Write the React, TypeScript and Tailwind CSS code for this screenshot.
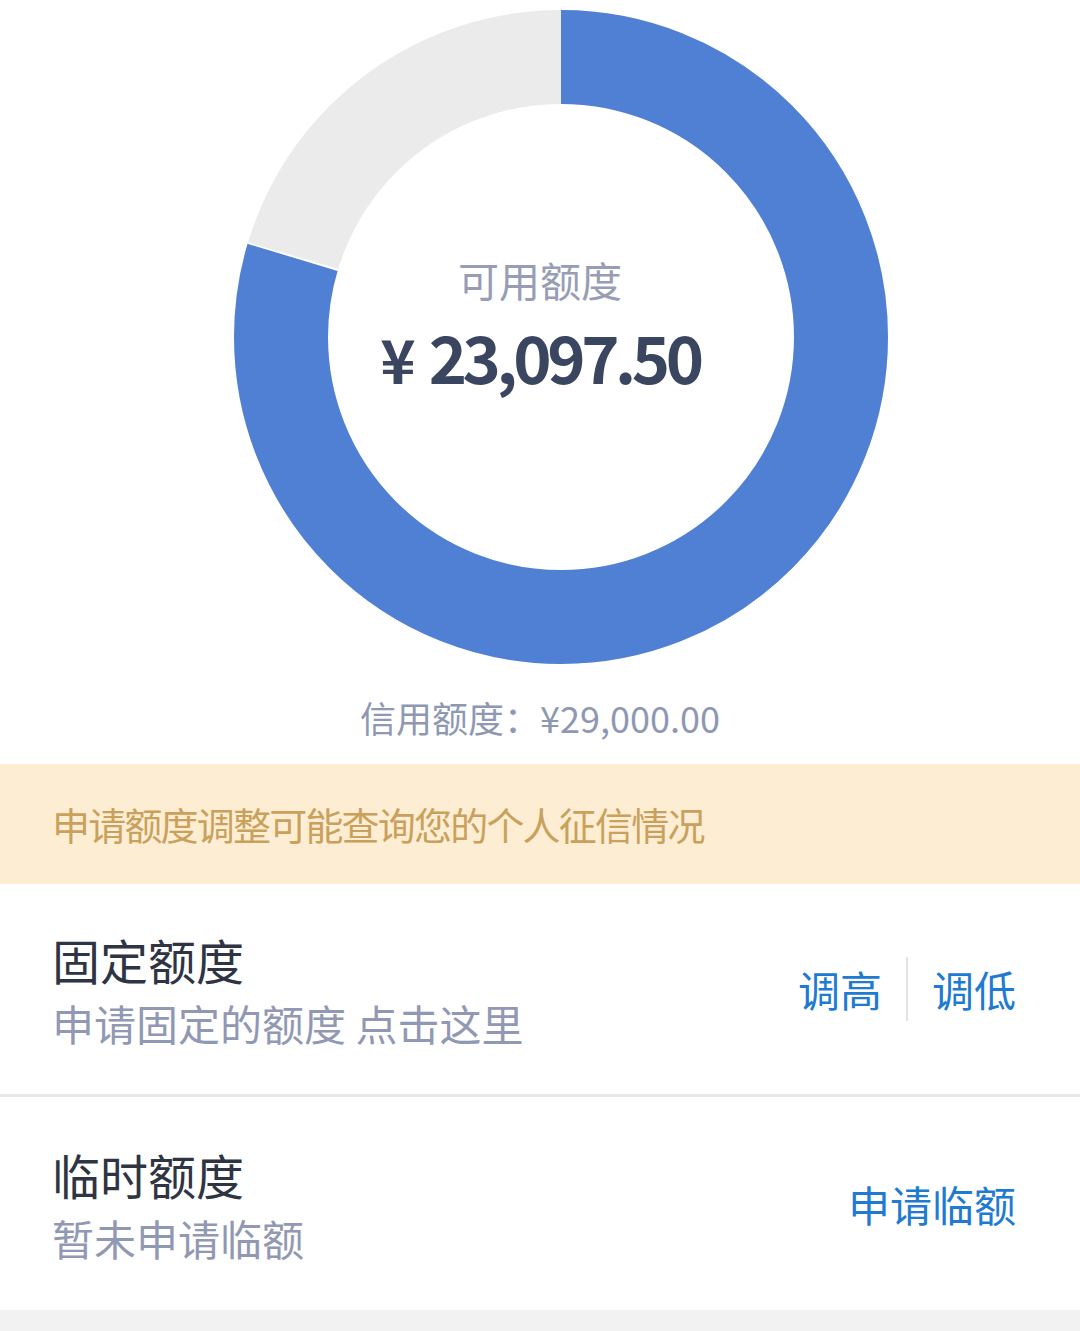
import React from "react";

type LimitRow = {
  title: string;
  desc: string;
  actions: string[];
};

const rows: LimitRow[] = [
  { title: "固定额度", desc: "申请固定的额度 点击这里", actions: ["调高", "调低"] },
  { title: "临时额度", desc: "暂未申请临额", actions: ["申请临额"] },
];

const total = 29000;
const available = 23097.5;

function Donut() {
  const r = 280;
  const c = 2 * Math.PI * r;
  const used = available / total;
  const blue = used * c;
  // separator between the two segments
  const a = used * 2 * Math.PI;
  const sx = (rad: number) => 327 + rad * Math.sin(a);
  const sy = (rad: number) => 327 - rad * Math.cos(a);

  return (
    <svg width="654" height="654" viewBox="0 0 654 654" className="block">
      <circle cx="327" cy="327" r={r} fill="none" stroke="#ebebeb" strokeWidth="94" />
      <circle
        cx="327"
        cy="327"
        r={r}
        fill="none"
        stroke="#5080d4"
        strokeWidth="94"
        strokeDasharray={`${blue} ${c}`}
        transform="rotate(-90 327 327)"
      />
      <line x1={sx(232)} y1={sy(232)} x2={sx(328)} y2={sy(328)} stroke="#ffffff" strokeWidth="2" />
    </svg>
  );
}

export default function App() {
  return (
    <div className="min-h-[1331px] bg-[#f2f2f2] font-['Noto_Sans_CJK_SC','Noto_Sans',sans-serif]">
      <div className="bg-white">
        {/* chart */}
        <div className="relative pt-[10px]">
          <div className="pl-[234px]">
            <Donut />
          </div>
          <div className="absolute inset-x-0 top-[254px] flex flex-col items-center">
            <div className="text-[41px] leading-[50px] text-[#969db5]">可用额度</div>
            <div className="mt-[12px] flex items-baseline text-[65px] leading-[80px] font-semibold text-[#3a4560]">
              <span className="mr-[13px] text-[60px]">¥</span>
              <span className="tracking-[-4.4px]">23,097.50</span>
            </div>
          </div>
        </div>
        <div className="mt-[33px] text-center text-[36px] leading-[40px] text-[#8e98b2]">
          信用额度：¥29,000.00
        </div>

        {/* notice */}
        <div className="mt-[27px] flex h-[120px] items-center bg-[#fdeed3] pl-[52px]">
          <span className="text-[38px] leading-[48px] tracking-[-1.8px] text-[#c9a15c]">
            申请额度调整可能查询您的个人征信情况
          </span>
        </div>

        {/* limit rows */}
        {rows.map((row, index) => (
          <div key={index} className={index > 0 ? "border-t-[3px] border-[#e8e8e8]" : ""}>
            <div
              className={`flex items-center justify-between pl-[52px] pr-[64px] ${
                index > 0 ? "h-[213px]" : "h-[210px]"
              }`}
            >
              <div className="flex flex-col">
                <div className="text-[48px] leading-[56px] text-[#2e3442]">{row.title}</div>
                <div className="mt-[12px] text-[42px] leading-[48px] text-[#9198b3]">{row.desc}</div>
              </div>
              <div className="flex items-center text-[42px] leading-[50px] text-[#1f7ad2]">
                {row.actions.map((action, i) => (
                  <React.Fragment key={i}>
                    {i > 0 && <div className="mx-[24px] h-[64px] w-[2px] bg-[#e3e3e3]" />}
                    <span>{action}</span>
                  </React.Fragment>
                ))}
              </div>
            </div>
          </div>
        ))}
      </div>
    </div>
  );
}
